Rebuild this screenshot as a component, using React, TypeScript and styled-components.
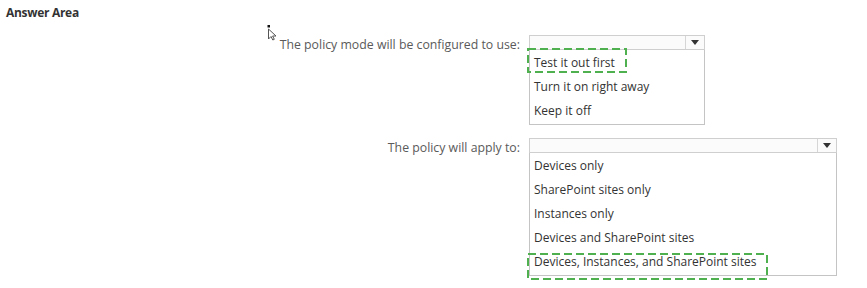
import styled, { createGlobalStyle } from "styled-components";

const GlobalStyle = createGlobalStyle`
  html, body {
    margin: 0;
    padding: 0;
    background: #ffffff;
  }
  body {
    font-family: "Open Sans", "Liberation Sans", sans-serif;
  }
`;

type Question = {
  label: string;
  width: number;
  options: string[];
  answer: number;
  mark: { left: number; top: number; width: number; height: number };
};

const questions: Question[] = [
  {
    label: "The policy mode will be configured to use:",
    width: 176,
    options: ["Test it out first", "Turn it on right away", "Keep it off"],
    answer: 0,
    mark: { left: -3, top: -3, width: 100, height: 25 },
  },
  {
    label: "The policy will apply to:",
    width: 308,
    options: [
      "Devices only",
      "SharePoint sites only",
      "Instances only",
      "Devices and SharePoint sites",
      "Devices, Instances, and SharePoint sites",
    ],
    answer: 4,
    mark: { left: -3, top: 3, width: 241, height: 27 },
  },
];

const App = () => {
  return (
    <Page>
      <GlobalStyle />
      <Title>Answer Area</Title>
      <Cursor viewBox="0 0 12 16" width="12" height="16">
        <rect x="0.5" y="0" width="2.5" height="2.5" fill="#111" />
        <path
          d="M1.5 4 L1.5 14 L4 11.5 L5.8 15 L7.3 14.3 L5.6 11 L9 11 Z"
          fill="#fff"
          stroke="#555"
          strokeWidth="1"
          strokeLinejoin="round"
        />
      </Cursor>
      <Questions>
        {questions.map((q) => (
          <QuestionRow key={q.label}>
            <Label>{q.label}</Label>
            <Dropdown $width={q.width}>
              <SelectBox>
                <SelectValue />
                <ArrowCell>
                  <Caret />
                </ArrowCell>
              </SelectBox>
              <OptionList>
                {q.options.map((opt, i) => (
                  <Option key={opt}>
                    {opt}
                    {i === q.answer && (
                      <AnswerMark
                        style={{
                          left: q.mark.left,
                          top: q.mark.top,
                          width: q.mark.width,
                          height: q.mark.height,
                        }}
                      >
                        <svg width="100%" height="100%">
                          <rect
                            x="1"
                            y="1"
                            width={q.mark.width - 2}
                            height={q.mark.height - 2}
                            fill="none"
                            stroke="#4fb04f"
                            strokeWidth="2"
                            strokeDasharray="8 4"
                          />
                        </svg>
                      </AnswerMark>
                    )}
                  </Option>
                ))}
              </OptionList>
            </Dropdown>
          </QuestionRow>
        ))}
      </Questions>
    </Page>
  );
};

export default App;

const Page = styled.div`
  position: relative;
  width: 867px;
  height: 288px;
  overflow: hidden;
  background: #ffffff;
`;

const Title = styled.div`
  padding: 4px 0 0 6px;
  height: 18px;
  font-family: "Open Sans", "Liberation Sans", sans-serif;
  font-size: 12px;
  font-weight: 700;
  color: #333333;
  letter-spacing: -0.3px;
`;

const Cursor = styled.svg`
  position: absolute;
  left: 267px;
  top: 25px;
`;

const Questions = styled.div`
  display: flex;
  flex-direction: column;
  gap: 13px;
  margin-top: 13px;
`;

const QuestionRow = styled.div`
  display: grid;
  grid-template-columns: 520px auto;
  column-gap: 9px;
  align-items: start;
`;

const Label = styled.div`
  text-align: right;
  font-size: 12.3px;
  line-height: 18px;
  color: #5a5a5a;
  padding-top: 1px;
`;

const Dropdown = styled.div<{ $width: number }>`
  width: ${(p) => p.$width}px;
  display: flex;
  flex-direction: column;
`;

const SelectBox = styled.div`
  height: 13px;
  display: flex;
  border: 1px solid #cfcfcf;
  background: #fbfbfb;
`;

const SelectValue = styled.div`
  flex: 1;
`;

const ArrowCell = styled.div`
  width: 18px;
  border-left: 1px solid #d6d6d6;
  display: flex;
  align-items: center;
  justify-content: center;
`;

const Caret = styled.span`
  width: 0;
  height: 0;
  border-left: 4px solid transparent;
  border-right: 4px solid transparent;
  border-top: 5px solid #333333;
`;

const OptionList = styled.div`
  border: 1px solid #c4c4c4;
  border-top: none;
  padding: 1px 0 1px;
  background: #ffffff;
`;

const Option = styled.div`
  position: relative;
  height: 24px;
  line-height: 24px;
  padding-left: 4px;
  font-size: 12px;
  color: #333333;
  white-space: nowrap;
`;

const AnswerMark = styled.span`
  position: absolute;
  pointer-events: none;
  svg {
    display: block;
  }
`;
